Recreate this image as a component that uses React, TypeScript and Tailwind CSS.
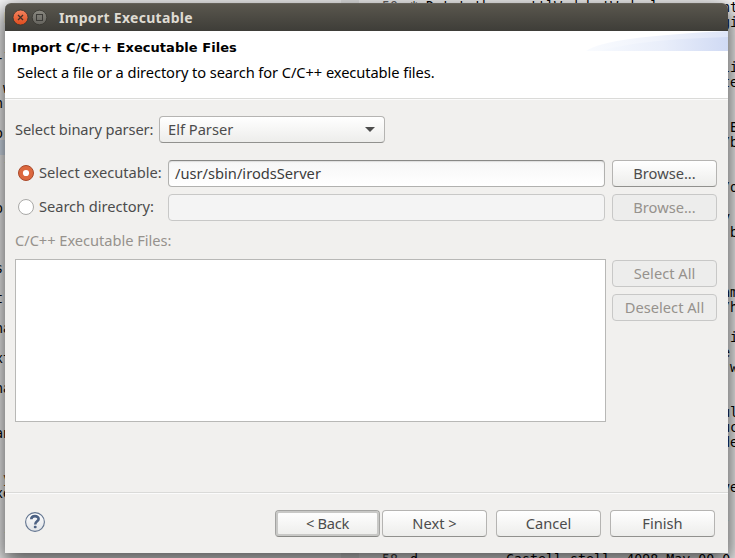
import type { ReactNode } from "react";

const leftLines: [number, number, string, string][] = [
  [15, 4, "p", "text-[#a0301a]"],
  [58, -4, "-l", "text-black"],
  [88, 3, "w", "text-black"],
  [103, -5, "n", "text-black"],
  [133, -5, "or", "text-black"],
  [162, 3, "-", "text-black"],
  [208, -5, "or", "text-black"],
  [268, -5, "s", "text-black"],
  [298, -5, "t", "text-black"],
  [328, -5, "na", "text-black"],
  [358, -5, "xt", "text-black"],
  [388, -5, "na", "text-black"],
  [433, -5, "an", "text-black"],
  [478, 3, "y", "text-[#7a3a10]"],
  [493, -5, "xe", "text-black"],
  [532, 3, "-", "text-black"],
];

const rightLines: [number, string][] = [
  [7, "nt"],
  [22, "gi"],
  [67, "li"],
  [82, "te"],
  [127, " E"],
  [142, "/b"],
  [187, "/o"],
  [217, "y"],
  [232, " b"],
  [292, "am"],
  [307, "/h"],
  [337, " i"],
  [352, "e"],
  [367, " w"],
  [412, "ul"],
  [427, "uc"],
  [442, "de"],
  [487, "ve"],
  [520, "-"],
];

function Code({ x, y, className = "text-black", children }: { x: number; y: number; className?: string; children: ReactNode }) {
  return (
    <span
      className={`absolute whitespace-pre font-['DejaVu_Sans_Mono',monospace] text-[13.3px] leading-[15px] ${className}`}
      style={{ left: x, top: y - 7 }}
    >
      {children}
    </span>
  );
}

function Editor() {
  return (
    <div className="absolute inset-0 bg-white">
      <div className="absolute left-0 top-[140px] h-[15px] w-5 bg-[#e2eefc]" />
      <div className="absolute left-[341px] top-0 h-full w-[18px] bg-[#f0f0f0]" />
      {leftLines.map(([y, x, t, c]) => (
        <Code key={y} x={x} y={y} className={c}>{t}</Code>
      ))}
      {rightLines.map(([y, t]) => (
        <Code key={y} x={722} y={y}>{t}</Code>
      ))}
      <Code x={382} y={6} className="text-[#666]">{"50"}</Code>
      <Code x={410} y={6}>{"* Dstat they settlWed hatWed elemen"}</Code>
      <Code x={382} y={559} className="text-[#444]">{"58"}</Code>
      <Code x={410} y={559}>{"d           Castell stell, 4098 May 00 0"}</Code>
    </div>
  );
}

function Button({ disabled, focused, className = "", children }: { disabled?: boolean; focused?: boolean; className?: string; children: ReactNode }) {
  const look = disabled
    ? "border-[#c8c8c7] bg-[#ededec] text-[#96928d]"
    : focused
      ? "border-[#a3a3a1] border-b-[#888885] bg-linear-to-b from-white to-[#ededeb] text-[#4c4c4c] tracking-[-0.3px] shadow-[inset_0_0_0_2px_#c8c8c6]"
      : "border-[#b5b4b2] border-b-[#91918e] bg-linear-to-b from-white to-[#ededeb] text-[#4c4c4c]";
  return (
    <button
      disabled={disabled}
      className={`flex h-[27px] w-[105px] shrink-0 items-center justify-center whitespace-nowrap rounded-[4px] border pb-[2px] ${look} ${className}`}
    >
      {children}
    </button>
  );
}

function HelpIcon() {
  return (
    <svg className="-mt-[3px]" width="22" height="22" viewBox="0 0 22 22">
      <defs>
        <linearGradient id="help" x1="0" y1="0" x2="0" y2="1">
          <stop offset="0" stopColor="#fff" />
          <stop offset="1" stopColor="#dfe2e6" />
        </linearGradient>
      </defs>
      <circle cx="11" cy="11" r="9.4" fill="url(#help)" stroke="#62748f" strokeWidth="1.1" />
      <path d="M7.3 8.2C7.3 4.2 14.6 4.2 14.6 7.9C14.6 10.2 11.2 10.4 11.2 13.4" fill="none" stroke="#4c6183" strokeWidth="2.6" />
      <rect x="9.8" y="14.8" width="2.8" height="2.5" rx="1" fill="#4c6183" />
    </svg>
  );
}

function Swoosh() {
  return (
    <svg className="block" width="142" height="20" viewBox="0 0 142 20">
      <defs>
        <linearGradient id="swoosh" x1="0" x2="1">
          <stop offset="0" stopColor="#f6f9fe" />
          <stop offset="0.5" stopColor="#e9eefa" />
          <stop offset="1" stopColor="#d0daf4" />
        </linearGradient>
      </defs>
      <path d="M0 20C14 10 60 4 142 0V20Z" fill="url(#swoosh)" opacity=".7" />
      <path d="M12 20C42 13 70 8 142 6V20Z" fill="url(#swoosh)" />
    </svg>
  );
}

export default function App() {
  return (
    <div className="relative h-[558px] w-[735px] overflow-hidden">
      <Editor />
      <main className="absolute left-[5px] top-[3px] flex h-[550px] w-[723px] flex-col rounded-t-[6px] bg-[#f1f0ee] font-['Noto_Sans','Open_Sans',sans-serif] text-[14.67px] leading-5 text-[#4c4c4c] shadow-[0_8px_22px_4px_rgba(0,0,0,0.66)]">
        <header className="flex h-7 shrink-0 items-center rounded-t-[6px] border-t border-[#65625a] bg-linear-to-b from-[#5a574e] to-[#3e3d38] pl-[7px]">
          <svg width="36" height="18" viewBox="0 0 36 18">
            <defs>
              <linearGradient id="close" x1="0" y1="0" x2="0" y2="1">
                <stop offset="0" stopColor="#f58460" />
                <stop offset="1" stopColor="#df4b1c" />
              </linearGradient>
              <linearGradient id="max" x1="0" y1="0" x2="0" y2="1">
                <stop offset="0" stopColor="#8a8880" />
                <stop offset="1" stopColor="#64635d" />
              </linearGradient>
            </defs>
            <circle cx="8.5" cy="8.5" r="7.5" fill="url(#close)" stroke="#35332d" strokeWidth=".8" />
            <path d="M6 6l5 5M11 6l-5 5" stroke="#443128" strokeWidth="1.3" />
            <circle cx="27.5" cy="8.5" r="7.3" fill="url(#max)" stroke="#35332d" strokeWidth=".8" />
            <rect x="24.5" y="5.5" width="6" height="6" fill="none" stroke="#3c3b37" />
          </svg>
          <h1 className="ml-[11px] whitespace-nowrap text-[14px] font-bold tracking-[0.3px] text-[#dfdbd2]">Import Executable</h1>
        </header>

        <section className="flex h-[67px] shrink-0 justify-between bg-white text-black">
          <div className="flex flex-col whitespace-nowrap">
            <h2 className="pl-[7px] pt-[7px] font-['DejaVu_Sans',sans-serif] text-[13px] font-bold leading-5 tracking-[0.05px]">Import C/C++ Executable Files</h2>
            <p className="pl-3 pt-1 tracking-[-0.08px]">Select a file or a directory to search for C/C++ executable files.</p>
          </div>
          <Swoosh />
        </section>

        <section className="flex flex-1 flex-col border-t border-[#dadad8] shadow-[inset_0_1px_0_#fbfbfb]">
          <div className="mt-[17px] flex h-[27px] items-center pl-[10px]">
            <label className="w-[144px] whitespace-nowrap pb-[2px] tracking-[-0.1px]">Select binary parser:</label>
            <div className="flex h-[27px] w-[226px] items-center justify-between rounded-[4px] border border-[#b5b4b2] border-b-[#91918e] bg-linear-to-b from-white to-[#ededeb] pl-2 pr-[9px]">
              <span className="pb-[2px]">Elf Parser</span>
              <svg width="10" height="5" viewBox="0 0 10 5"><path d="M0 0h10L5 5z" fill="#4c4c4c" /></svg>
            </div>
          </div>

          <div className="mt-[17px] flex h-[27px] items-center pl-3">
            <svg className="-mt-px" width="18" height="18" viewBox="0 0 18 18">
              <circle cx="9" cy="9" r="7.5" fill="#dc683e" stroke="#a9492a" />
              <circle cx="9" cy="9" r="3.1" fill="white" />
            </svg>
            <label className="ml-1 w-[129px] whitespace-nowrap pb-[3px]">Select executable:</label>
            <div className="flex h-[27px] w-[437px] items-center rounded-[4px] border border-[#b1b1af] border-t-[#888886] bg-linear-to-b from-[#f6f6f6] to-white pb-[2px] pl-[6px] text-[#3c3c3c] shadow-[inset_0_1px_1px_#dedede]">
              <span>/usr/sbin/irodsServer</span>
            </div>
            <Button className="ml-[7px]">Browse...</Button>
          </div>

          <div className="mt-[7px] flex h-[27px] items-center pl-3">
            <svg className="-mt-px" width="18" height="18" viewBox="0 0 18 18">
              <circle cx="9" cy="9" r="7.5" fill="white" stroke="#a9a9a7" />
            </svg>
            <label className="ml-1 w-[129px] whitespace-nowrap pb-[3px] tracking-[-0.05px]">Search directory:</label>
            <div className="h-[27px] w-[437px] rounded-[4px] border border-[#c8c8c7] bg-[#f4f4f4]" />
            <Button disabled className="ml-[7px]">Browse...</Button>
          </div>

          <label className="mt-[9px] pl-[10px] tracking-[-0.04px] text-[#96928d]">C/C++ Executable Files:</label>
          <div className="mt-[9px] flex pl-[10px]">
            <div className="h-[163px] w-[591px] border border-[#b8b8b6] bg-white" />
            <div className="ml-[6px] mt-px flex flex-col gap-[7px]">
              <Button disabled>Select All</Button>
              <Button disabled>Deselect All</Button>
            </div>
          </div>
        </section>

        <footer className="flex h-[61px] shrink-0 items-center border-t border-[#dadad8] pl-[19px] pt-px shadow-[inset_0_1px_0_#fbfbfb]">
          <HelpIcon />
          <div className="ml-[229px] flex">
            <Button focused>&lt; Back</Button>
            <Button className="ml-[2px]">Next &gt;</Button>
            <Button className="ml-[9px]">Cancel</Button>
            <Button className="ml-[9px]">Finish</Button>
          </div>
        </footer>
      </main>
    </div>
  );
}
